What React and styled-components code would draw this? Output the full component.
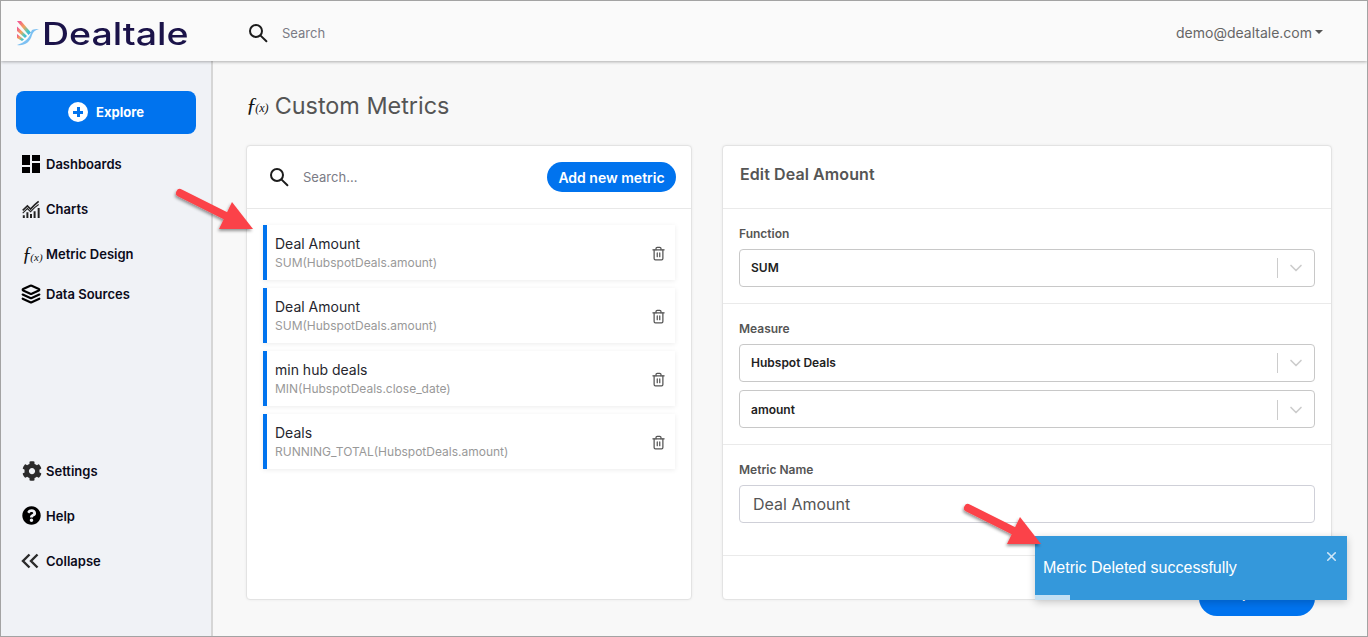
import React from "react";
import styled, { createGlobalStyle } from "styled-components";
import { MdDashboard } from "react-icons/md";
import { FaCog, FaQuestionCircle } from "react-icons/fa";
import { LuLayers, LuTrash2, LuChevronDown, LuX } from "react-icons/lu";

const Global = createGlobalStyle`
  html, body { margin: 0; padding: 0; background: #fff; }
  * { box-sizing: border-box; }
  body { font-family: Inter, "Liberation Sans", sans-serif; }
`;

const metrics = [
  { name: "Deal Amount", formula: "SUM(HubspotDeals.amount)" },
  { name: "Deal Amount", formula: "SUM(HubspotDeals.amount)" },
  { name: "min hub deals", formula: "MIN(HubspotDeals.close_date)" },
  { name: "Deals", formula: "RUNNING_TOTAL(HubspotDeals.amount)" },
];

const SearchIcon = ({ size = 20 }) => (
  <svg width={size} height={size} viewBox="0 0 20 20" fill="none" stroke="#1c1c1c" strokeWidth="2" strokeLinecap="round">
    <circle cx="8" cy="8" r="6" />
    <path d="M12.6 12.6 18.4 18.2" />
  </svg>
);

const ChartsIcon = () => (
  <svg width="18" height="18" viewBox="0 0 20 20" fill="none" stroke="#222" strokeWidth="1.8">
    <path d="M.8 11.500 6 6.500l3.500 3.500L14 5.500l4.500-4" />
    <path d="M.8 14.500 6 9.500l3.500 3.500L14 8.500l4.500-3.500" strokeWidth="1.200" />
    <path d="M2 17v3M6 13.500V20M10 15.500V20M14 12.500V20M18.500 9v11" strokeWidth="2.200" />
  </svg>
);

const CollapseIcon = () => (
  <svg width="18" height="16" viewBox="0 0 18 16" fill="none" stroke="#2b2b2b" strokeWidth="2.400">
    <path d="M8.500 1.500 2 8l6.500 6.500M16.500 1.500 10 8l6.500 6.500" />
  </svg>
);

const LogoMark = () => (
  <svg width="24" height="26" viewBox="0 0 24 26" fill="none">
    <defs>
      <linearGradient id="dtStripes" x1="0" y1="0" x2="1" y2="1">
        <stop offset="0" stopColor="#f0489c" />
        <stop offset="0.45" stopColor="#f5a35a" />
        <stop offset="0.75" stopColor="#43c9c2" />
        <stop offset="1" stopColor="#4c9df0" />
      </linearGradient>
    </defs>
    <path d="M1 1h4l10 11.500-2.500 2.500z" fill="url(#dtStripes)" />
    <path d="M1 6.500l10 9.500-2 2L1 11z" fill="url(#dtStripes)" />
    <path d="M1 14l7 5.500-2 1.500-5-3z" fill="url(#dtStripes)" />
    <path d="M1 25c7 1 13-2 15-10 1-3 3-5 7-6-3 0-5 0-7 1l-1 2c-1 6-7 11-14 13z" fill="#7cc0f2" />
  </svg>
);

const Arrow = ({ className }) => (
  <svg className={className} width="90" height="60" viewBox="0 0 90 60">
    <defs>
      <filter id="arrowShadow" x="-20%" y="-20%" width="140%" height="150%">
        <feDropShadow dx="-1" dy="2" stdDeviation="1.500" floodColor="#000" floodOpacity="0.4" />
      </filter>
    </defs>
    <g filter="url(#arrowShadow)">
      <path d="M8 8 56 32" stroke="#fb4348" strokeWidth="8" strokeLinecap="round" />
      <path d="M60 17 81 44H47z" fill="#fb4348" />
    </g>
  </svg>
);

export default function App() {
  return (
    <Frame>
      <Global />
      <Header>
        <Logo>
          <LogoMark />
          <LogoText>Dealtale</LogoText>
        </Logo>
        <TopSearch>
          <SearchIcon />
          <span>Search</span>
        </TopSearch>
        <UserMenu>demo@dealtale.com</UserMenu>
      </Header>
      <Body>
        <Sidebar>
          <ExploreButton>
            <PlusDisc />
            Explore
          </ExploreButton>
          <NavItem>
            <NavIcon $x={3}><MdDashboard size={24} color="#000" /></NavIcon>
            Dashboards
          </NavItem>
          <NavItem>
            <NavIcon $x={6}><ChartsIcon /></NavIcon>
            Charts
          </NavItem>
          <NavItem $short>
            <NavIcon $x={6}><Fx $size={20}>ƒ<small>(x)</small></Fx></NavIcon>
            Metric Design
          </NavItem>
          <NavItem>
            <NavIcon $x={5}><LuLayers size={20} color="#000" strokeWidth={2.6} /></NavIcon>
            Data Sources
          </NavItem>
          <BottomNav>
            <NavItem>
              <NavIcon $x={6}><FaCog size={20} color="#2b2b2b" /></NavIcon>
              Settings
            </NavItem>
            <NavItem>
              <NavIcon $x={6}><FaQuestionCircle size={19} color="#000" /></NavIcon>
              Help
            </NavItem>
            <NavItem>
              <NavIcon $x={5}><CollapseIcon /></NavIcon>
              Collapse
            </NavItem>
          </BottomNav>
        </Sidebar>
        <Main>
          <PageTitle>
            <Fx $size={22}>ƒ<small>(x)</small></Fx>
            Custom Metrics
          </PageTitle>
          <Columns>
            <ListCard>
              <ListHead>
                <SearchIcon />
                <ListSearch>Search...</ListSearch>
                <AddButton>Add new metric</AddButton>
              </ListHead>
              <MetricList>
                {metrics.map((m, i) => (
                  <MetricRow key={i}>
                    <div>
                      <MetricName>{m.name}</MetricName>
                      <MetricFormula>{m.formula}</MetricFormula>
                    </div>
                    <LuTrash2 size={15} color="#555" />
                  </MetricRow>
                ))}
              </MetricList>
            </ListCard>
            <EditCard>
              <EditHead>Edit Deal Amount</EditHead>
              <Section $h={95}>
                <FieldLabel>Function</FieldLabel>
                <SelectBox>
                  SUM
                  <SelectArrow><LuChevronDown size={20} /></SelectArrow>
                </SelectBox>
              </Section>
              <Section $h={141}>
                <FieldLabel>Measure</FieldLabel>
                <SelectBox>
                  Hubspot Deals
                  <SelectArrow><LuChevronDown size={20} /></SelectArrow>
                </SelectBox>
                <SelectBox $next>
                  amount
                  <SelectArrow><LuChevronDown size={20} /></SelectArrow>
                </SelectBox>
              </Section>
              <Section $h={111}>
                <FieldLabel>Metric Name</FieldLabel>
                <NameInput>Deal Amount</NameInput>
              </Section>
              <EditFooter>
                <UpdateButton>Update</UpdateButton>
              </EditFooter>
            </EditCard>
          </Columns>
        </Main>
      </Body>
      <ArrowOne />
      <ArrowTwo />
      <Toast>
        Metric Deleted successfully
        <ToastClose><LuX size={15} strokeWidth={2.5} /></ToastClose>
        <ToastProgress />
      </Toast>
    </Frame>
  );
}

const Frame = styled.div`
  position: relative;
  width: 1368px;
  height: 637px;
  border: 1px solid #a3a3a3;
  display: flex;
  flex-direction: column;
  overflow: hidden;
  background: #f8f8f8;
`;

const Header = styled.header`
  height: 60px;
  flex: none;
  background: #fafafa;
  box-shadow: 0 1px 3px rgba(0, 0, 0, 0.3);
  display: flex;
  align-items: center;
  padding: 4px 44px 0 15px;
  position: relative;
  z-index: 2;
`;

const Logo = styled.div`
  width: 232px;
  display: flex;
  align-items: center;
`;

const LogoText = styled.span`
  display: inline-block;
  font-size: 31px;
  font-weight: 500;
  color: #1b1349;
  margin-left: 2px;
  transform: scaleX(1.21);
  transform-origin: left center;
`;

const TopSearch = styled.div`
  flex: 1;
  display: flex;
  align-items: center;
  gap: 14px;
  font-size: 13px;
  color: #7b7b85;
`;

const UserMenu = styled.div`
  font-size: 14px;
  color: #666;
  display: flex;
  align-items: center;
  margin-top: -2px;
  &::after {
    content: "";
    margin-left: 3px;
    border-top: 4px solid #555;
    border-left: 4px solid transparent;
    border-right: 4px solid transparent;
  }
`;

const Body = styled.div`
  flex: 1;
  display: flex;
  min-height: 0;
`;

const Sidebar = styled.aside`
  width: 212px;
  flex: none;
  background: #f0f2f6;
  border-right: 2px solid #d6d6d6;
  padding: 30px 15px 53px;
  display: flex;
  flex-direction: column;
`;

const ExploreButton = styled.div`
  height: 43px;
  flex: none;
  width: 180px;
  background: #0073ee;
  border-radius: 8px;
  color: #fff;
  font-size: 13px;
  font-weight: 700;
  line-height: 18px;
  padding-bottom: 1px;
  display: flex;
  align-items: center;
  justify-content: center;
  gap: 8px;
  margin-bottom: 7px;
`;

const PlusDisc = styled.span`
  width: 20px;
  height: 20px;
  border-radius: 50%;
  background:
    linear-gradient(#0073ee, #0073ee) center / 10px 3px no-repeat,
    linear-gradient(#0073ee, #0073ee) center / 3px 10px no-repeat,
    #fff;
`;

const NavItem = styled.div`
  height: ${(p) => (p.$short ? "40px" : "45px")};
  flex: none;
  display: flex;
  align-items: ${(p) => (p.$short ? "flex-start" : "center")};
  padding-top: ${(p) => (p.$short ? "13px" : "0")};
  font-size: 13px;
  font-weight: 600;
  color: #0b0b1a;
  line-height: 20px;
`;

const NavIcon = styled.span`
  width: 30px;
  flex: none;
  padding-left: ${(p) => p.$x}px;
  display: flex;
  align-items: center;
  color: #111;
`;

const BottomNav = styled.div`
  margin-top: auto;
`;

const Fx = styled.span`
  font-family: "Liberation Serif", serif;
  font-style: italic;
  font-size: ${(p) => p.$size}px;
  font-weight: 400;
  color: #111;
  line-height: 1;
  white-space: nowrap;
  small {
    font-size: 0.55em;
    margin-left: -0.15em;
  }
`;

const Main = styled.main`
  flex: 1;
  padding: 0 35px 0 33px;
  min-width: 0;
`;

const PageTitle = styled.h1`
  margin: 0;
  height: 84px;
  padding-top: 4px;
  display: flex;
  align-items: center;
  gap: 6px;
  font-size: 23.4px;
  font-weight: 400;
  color: #555;
`;

const Columns = styled.div`
  display: flex;
  gap: 30px;
  align-items: flex-start;
`;

const Card = styled.section`
  height: 455px;
  background: #fff;
  border: 1px solid #e3e3e3;
  border-radius: 4px;
  box-shadow: 0 0 3px rgba(0, 0, 0, 0.06);
`;

const ListCard = styled(Card)`
  width: 446px;
`;

const ListHead = styled.div`
  height: 63px;
  border-bottom: 1px solid #e8e8e8;
  display: flex;
  align-items: center;
  padding: 0 15px 0 22px;
`;

const ListSearch = styled.span`
  flex: 1;
  font-size: 13px;
  color: #7b7b85;
  margin-left: 14px;
`;

const AddButton = styled.div`
  height: 30px;
  width: 129px;
  border-radius: 15px;
  background: #0073ee;
  color: #fff;
  font-size: 14px;
  font-weight: 600;
  display: flex;
  align-items: center;
  justify-content: center;
`;

const MetricList = styled.div`
  padding: 16px 16px 0 16px;
  display: flex;
  flex-direction: column;
  gap: 8px;
`;

const MetricRow = styled.div`
  height: 55px;
  background: #fff;
  border-left: 4px solid #0073ee;
  box-shadow: 0 1px 5px rgba(0, 0, 0, 0.08);
  display: flex;
  align-items: center;
  justify-content: space-between;
  padding: 2px 9px 0 8px;
`;

const MetricName = styled.div`
  font-size: 14px;
  line-height: 18px;
  color: #26262e;
`;

const MetricFormula = styled.div`
  font-size: 12px;
  line-height: 18px;
  margin-top: 1px;
  color: #999;
`;

const EditCard = styled(Card)`
  width: 610px;
  display: flex;
  flex-direction: column;
`;

const EditHead = styled.div`
  height: 63px;
  flex: none;
  border-bottom: 1px solid #eaeaea;
  padding: 18px 17px 0;
  font-size: 16px;
  line-height: 20px;
  font-weight: 600;
  letter-spacing: 0.1px;
  color: #555;
`;

const Section = styled.div`
  height: ${(p) => p.$h}px;
  flex: none;
  border-bottom: 1px solid #eaeaea;
  padding: 17px 16px 0;
  display: flex;
  flex-direction: column;
  gap: 7px;
`;

const FieldLabel = styled.div`
  font-size: 12px;
  line-height: 16px;
  font-weight: 600;
  color: #555;
`;

const SelectBox = styled.div`
  height: 38px;
  flex: none;
  margin-top: ${(p) => (p.$next ? "1px" : "0")};
  border: 1px solid #c8c8c8;
  border-radius: 4px;
  font-size: 12px;
  font-weight: 600;
  color: #222;
  display: flex;
  align-items: center;
  justify-content: space-between;
  padding: 0 0 ${(p) => (p.$next ? "0" : "2px")} 11px;
`;

const SelectArrow = styled.span`
  width: 37px;
  height: 20px;
  margin-top: 2px;
  border-left: 1px solid #ccc;
  color: #ccc;
  display: flex;
  align-items: center;
  justify-content: center;
`;

const NameInput = styled.div`
  height: 38px;
  flex: none;
  border: 1px solid #cfd0d8;
  border-radius: 4px;
  font-size: 16px;
  color: #555;
  display: flex;
  align-items: center;
  padding-left: 13px;
`;

const EditFooter = styled.div`
  flex: none;
  display: flex;
  justify-content: flex-end;
  padding: 24px 16px 0 0;
`;

const UpdateButton = styled.div`
  width: 116px;
  height: 36px;
  flex: none;
  border-radius: 18px;
  background: #0073ee;
  color: #fff;
  font-size: 15px;
  font-weight: 600;
  padding-bottom: 11px;
  display: flex;
  align-items: center;
  justify-content: center;
`;

const ArrowOne = styled(Arrow)`
  position: absolute;
  left: 171px;
  top: 184px;
  z-index: 5;
`;

const ArrowTwo = styled(Arrow)`
  position: absolute;
  left: 959px;
  top: 499px;
  z-index: 5;
`;

const Toast = styled.div`
  position: absolute;
  left: 1034px;
  top: 535px;
  width: 312px;
  height: 64px;
  background: #3498db;
  color: #fff;
  font-family: "Liberation Sans", sans-serif;
  font-size: 16px;
  display: flex;
  align-items: center;
  padding-left: 8px;
  box-shadow: 0 2px 8px rgba(0, 0, 0, 0.2);
  z-index: 4;
`;

const ToastClose = styled.span`
  position: absolute;
  right: 8px;
  top: 13px;
  display: flex;
  color: #cfe6f6;
`;

const ToastProgress = styled.span`
  position: absolute;
  left: 0;
  bottom: 0;
  width: 35px;
  height: 5px;
  background: #c2dff3;
`;
